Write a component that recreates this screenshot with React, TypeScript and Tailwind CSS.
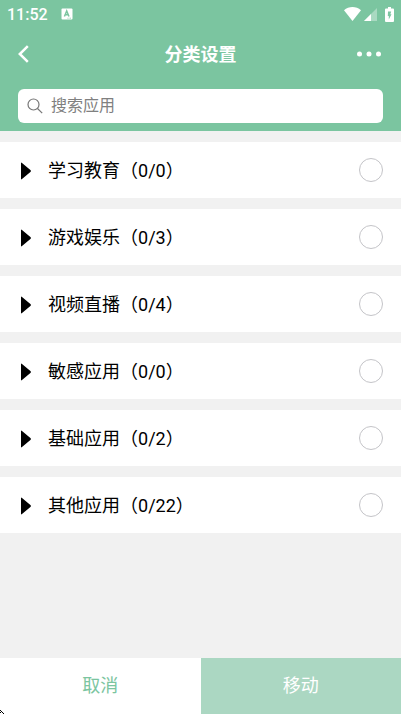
import { useState } from 'react'

interface Category {
  id: string
  name: string
  selected: number
  total: number
}

const categories: Category[] = [
  { id: 'study', name: '学习教育', selected: 0, total: 0 },
  { id: 'games', name: '游戏娱乐', selected: 0, total: 3 },
  { id: 'video', name: '视频直播', selected: 0, total: 4 },
  { id: 'sensitive', name: '敏感应用', selected: 0, total: 0 },
  { id: 'basic', name: '基础应用', selected: 0, total: 2 },
  { id: 'other', name: '其他应用', selected: 0, total: 22 },
]

function StatusBar() {
  return (
    <div className="flex h-7 items-center justify-between px-[7px]">
      <div className="flex items-center gap-[13px]">
        <span className="pt-px text-base leading-7 font-medium">11:52</span>
        <svg width="12" height="12" viewBox="0 0 12 12" aria-hidden="true">
          <rect x="0.5" y="0.5" width="11" height="11" rx="1" fill="#fff" />
          <path d="M3.4 8.5 5.7 3 8 8.5M4.2 6.8h3" fill="none" stroke="#7bc5a0" strokeWidth="1.5" />
          <path d="M6.5 10.2h1M8.5 10.2h1.4" stroke="#7bc5a0" strokeWidth="0.8" />
        </svg>
      </div>
      <div className="flex items-center">
        <svg width="17" height="14" viewBox="0 0 17 14" aria-hidden="true">
          <path d="M0 3.2C4.8-1 12.2-1 17 3.2L8.5 14Z" fill="#fff" />
        </svg>
        <svg className="ml-[3px]" width="13" height="14" viewBox="0 0 13 14" aria-hidden="true">
          <path d="M0 14 13 1V14Z" fill="#fff" fillOpacity="0.35" />
          <path d="M0 14 7 7V14Z" fill="#fff" />
        </svg>
        <svg className="ml-2" width="9" height="15" viewBox="0 0 9 15" aria-hidden="true">
          <path d="M3 0h3v1.5h2q1 0 1 1V14q0 1-1 1H1q-1 0-1-1V2.5q0-1 1-1h2Z" fill="#fff" />
          <path d="M3 4.5H6.2L5.3 7.2H6.5L3.8 12.5V9H2.8Z" fill="#7bc5a0" />
        </svg>
      </div>
    </div>
  )
}

function CategoryRow({ category }: { category: Category }) {
  const [checked, setChecked] = useState(false)

  return (
    <li className="flex h-14 items-center bg-white px-[18px]">
      <button type="button" className="flex flex-1 items-center pt-0.5 text-left">
        <svg className="ml-[3px]" width="10" height="18" viewBox="0 0 10 18" aria-hidden="true">
          <path d="M0 1.2Q0 0 1 .9L9.4 8Q10.4 9 9.4 10L1 17.1Q0 18 0 16.8Z" fill="#000" />
        </svg>
        <span className="ml-[17px] text-lg leading-7 text-black">
          {category.name}（{category.selected}/{category.total}）
        </span>
      </button>
      <input
        type="checkbox"
        aria-label={category.name}
        checked={checked}
        onChange={(e) => setChecked(e.target.checked)}
        className="size-6 appearance-none rounded-full border border-[#c4c4c8] bg-white checked:border-[#7bc5a0] checked:bg-[#7bc5a0]"
      />
    </li>
  )
}

export default function App() {
  const [query, setQuery] = useState('')
  const visible = categories.filter((c) => c.name.includes(query))

  return (
    <div className="flex min-h-screen flex-col bg-[#f1f1f1] font-[Roboto,'Noto_Sans_CJK_SC',sans-serif]">
      <header className="bg-[#7bc5a0] pb-2 text-white">
        <StatusBar />
        <div className="flex h-[52px] items-center justify-between px-[18px]">
          <button type="button" aria-label="返回" className="flex w-7 items-center">
            <svg width="11" height="18" viewBox="0 0 11 18" aria-hidden="true">
              <path d="M9.8 1.2 1.8 9l8 7.8" fill="none" stroke="#fff" strokeWidth="2.5" />
            </svg>
          </button>
          <h1 className="pt-0.5 text-lg leading-7 font-bold">分类设置</h1>
          <button type="button" aria-label="更多" className="flex w-7 items-center justify-end">
            <svg width="26" height="6" viewBox="0 0 26 6" fill="#fff" aria-hidden="true">
              <circle cx="2.5" cy="3" r="2.5" />
              <circle cx="12" cy="3" r="2.5" />
              <circle cx="21.5" cy="3" r="2.5" />
            </svg>
          </button>
        </div>
        <label className="mx-[18px] mt-[9px] flex h-[34px] items-center gap-2 rounded-md bg-white pl-[9px]">
          <svg width="16" height="16" viewBox="0 0 16 16" fill="none" stroke="#777" strokeWidth="1.2" aria-hidden="true">
            <circle cx="6.5" cy="6.5" r="5.5" />
            <path d="M10.5 10.5 15.2 15.2" />
          </svg>
          <input
            type="text"
            aria-label="搜索应用"
            placeholder="搜索应用"
            value={query}
            onChange={(e) => setQuery(e.target.value)}
            className="min-w-0 flex-1 bg-transparent text-base leading-6 text-black outline-none placeholder:text-[#808080]"
          />
        </label>
      </header>

      <ul className="mt-[11px] flex flex-col gap-[11px]">
        {visible.map((category) => (
          <CategoryRow key={category.id} category={category} />
        ))}
      </ul>

      <footer className="mt-auto grid h-14 grid-cols-2 text-lg leading-7">
        <button type="button" className="bg-white text-[#7bc5a0]">取消</button>
        <button type="button" className="bg-[#abd7c2] text-white">移动</button>
      </footer>

      {/* tip of the resize cursor in the corner */}
      <svg className="pointer-events-none fixed bottom-0 left-0" width="4" height="4" viewBox="0 0 4 4" aria-hidden="true">
        <path d="M0 0h1v1h1v1h-1v-1h-1ZM2 2h1v1h1v1h-1v-1h-1ZM0 2h1v1h-1Z" fill="#000" />
      </svg>
    </div>
  )
}
